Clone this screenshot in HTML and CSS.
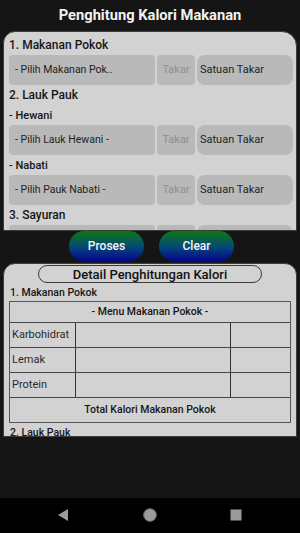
FILE: index.html
```html
<!DOCTYPE html>
<html>
<head>
<meta charset="utf-8">
<link rel="stylesheet" href="styles.css">
</head>
<body>
<div class="screen">
  <header class="title">Penghitung Kalori Makanan</header>

  <section class="card input-card">
    <div class="h1">1. Makanan Pokok</div>
    <div class="row">
      <div class="spin">- Pilih Makanan Pok..</div>
      <div class="takar">Takar</div>
      <div class="satuan">Satuan Takar</div>
    </div>
    <div class="h1">2. Lauk Pauk</div>
    <div class="h2">- Hewani</div>
    <div class="row">
      <div class="spin">- Pilih Lauk Hewani -</div>
      <div class="takar">Takar</div>
      <div class="satuan">Satuan Takar</div>
    </div>
    <div class="h2">- Nabati</div>
    <div class="row">
      <div class="spin">- Pilih Pauk Nabati -</div>
      <div class="takar">Takar</div>
      <div class="satuan">Satuan Takar</div>
    </div>
    <div class="h1">3. Sayuran</div>
    <div class="row">
      <div class="spin"></div>
      <div class="takar"></div>
      <div class="satuan"></div>
    </div>
  </section>

  <div class="buttons">
    <button class="btn">Proses</button>
    <button class="btn">Clear</button>
  </div>

  <section class="card detail-card">
    <div class="pill">Detail Penghitungan Kalori</div>
    <div class="dh">1. Makanan Pokok</div>
    <div class="table">
      <div class="thead">- Menu Makanan Pokok -</div>
      <div class="trow"><div class="lbl">Karbohidrat</div><div class="mid"></div><div class="val"></div></div>
      <div class="trow"><div class="lbl">Lemak</div><div class="mid"></div><div class="val"></div></div>
      <div class="trow"><div class="lbl">Protein</div><div class="mid"></div><div class="val"></div></div>
      <div class="tfoot">Total Kalori Makanan Pokok</div>
    </div>
    <div class="dh">2. Lauk Pauk</div>
  </section>

  <div class="spacer"></div>

  <nav class="navbar">
    <svg class="nav-ico" width="14" height="14" viewBox="0 0 14 14"><path d="M12 1 L12 13 L2 7 Z" fill="#9b9b9b"/></svg>
    <svg class="nav-ico" width="16" height="16" viewBox="0 0 16 16"><circle cx="8" cy="8" r="6.3" fill="#9b9b9b" stroke="#6e6e6e" stroke-width="1"/></svg>
    <svg class="nav-ico" width="12" height="12" viewBox="0 0 12 12"><rect x="0.5" y="0.5" width="11" height="11" fill="#9b9b9b"/></svg>
  </nav>
</div>
</body>
</html>
```

FILE: styles.css
```css
* { box-sizing: border-box; }
html, body { margin: 0; padding: 0; }
body {
  background: #151515;
  font-family: Roboto, "Liberation Sans", sans-serif;
  color: #161616;
}
.screen {
  width: 300px;
  height: 533px;
  display: flex;
  flex-direction: column;
  overflow: hidden;
}
.title {
  height: 31px;
  line-height: 30px;
  text-align: center;
  color: #f2f2f2;
  font-weight: 700;
  font-size: 14.7px;
}
.card {
  margin: 0 3px;
  background: #d2d2d2;
  border: 1px solid #3c3c3c;
  overflow: hidden;
}
.input-card {
  height: 200px;
  border-radius: 12px 15px 0 0;
  padding: 3px 3px 0 5px;
}
.h1 {
  height: 20px;
  line-height: 20px;
  font-size: 12px;
  font-weight: 500;
}
.h2 {
  height: 20px;
  line-height: 21px;
  font-size: 11px;
  font-weight: 500;
}
.row {
  display: flex;
  gap: 2px;
  height: 30px;
  flex-shrink: 0;
}
.spin, .takar, .satuan {
  background: #b9b9b9;
  height: 30px;
  line-height: 30px;
  font-size: 11px;
  white-space: nowrap;
  overflow: hidden;
}
.spin {
  width: 146px;
  border-radius: 4px;
  padding-left: 6px;
  color: #222;
  font-size: 10.5px;
}
.takar {
  width: 38px;
  border-radius: 4px;
  text-align: center;
  color: #8e8e8e;
}
.satuan {
  width: 96px;
  border-radius: 8px;
  padding-left: 3px;
  color: #222;
}
.buttons {
  display: flex;
  justify-content: center;
  gap: 15px;
  padding-left: 3px;
  height: 32px;
  align-items: flex-start;
}
.btn {
  width: 75px;
  height: 30px;
  border: none;
  border-radius: 15px;
  background: linear-gradient(to bottom, #0a7a12 0%, #05467a 55%, #05058e 100%);
  color: #f4f4f4;
  font-family: Roboto, "Liberation Sans", sans-serif;
  font-size: 12px;
  font-weight: 500;
  padding: 0;
}
.detail-card {
  height: 174px;
  border-radius: 12px 12px 0 0;
  padding: 1px 5px 0 5px;
}
.pill {
  margin: 0 29px 0 29px;
  height: 18px;
  line-height: 17px;
  border: 1px solid #3a3a3a;
  border-radius: 10px;
  text-align: center;
  font-size: 13px;
  font-weight: 500;
  color: #111;
}
.dh {
  height: 18px;
  line-height: 19px;
  font-size: 10.5px;
  font-weight: 500;
  padding-left: 1px;
}
.table {
  border: 1px solid #555;
  display: flex;
  flex-direction: column;
}
.thead, .tfoot {
  text-align: center;
  font-size: 10.5px;
  font-weight: 500;
}
.thead {
  height: 21px;
  line-height: 20px;
  border-bottom: 1px solid #444;
}
.trow {
  display: flex;
  height: 25px;
  border-bottom: 1px solid #444;
}
.lbl {
  width: 66px;
  border-right: 1px solid #333;
  font-size: 11px;
  line-height: 24px;
  padding-left: 2px;
  color: #2a2a2a;
}
.mid {
  width: 155px;
  border-right: 1px solid #333;
}
.val { flex: 1; }
.tfoot {
  height: 24px;
  line-height: 24px;
}
.spacer { flex: 1; }
.navbar {
  height: 35px;
  background: #000;
  display: flex;
  align-items: center;
  position: relative;
}
.nav-ico { position: absolute; }
.nav-ico:nth-child(1) { left: 56px; top: 10px; }
.nav-ico:nth-child(2) { left: 142px; top: 9px; }
.nav-ico:nth-child(3) { left: 230px; top: 11px; }
```
